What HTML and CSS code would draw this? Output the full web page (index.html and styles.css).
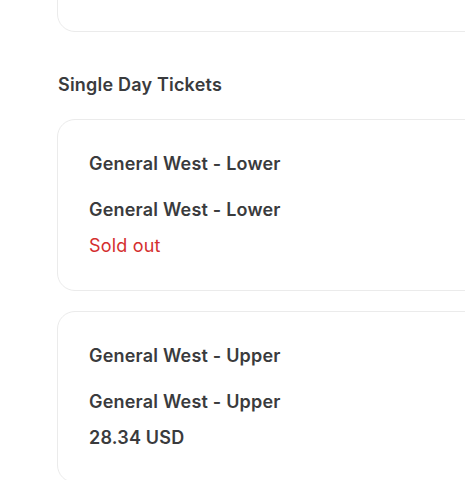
FILE: index.html
```html
<!DOCTYPE html>
<html lang="en">
<head>
<meta charset="utf-8">
<title>Tickets</title>
<link rel="stylesheet" href="styles.css">
</head>
<body>
<main class="page">
  <div class="card card-prev"></div>
  <h2 class="section-title">Single Day Tickets</h2>
  <div class="card">
    <div class="ticket-title">General West - Lower</div>
    <div class="ticket-name">General West - Lower</div>
    <div class="ticket-status sold-out">Sold out</div>
  </div>
  <div class="card">
    <div class="ticket-title">General West - Upper</div>
    <div class="ticket-name">General West - Upper</div>
    <div class="ticket-status price">28.34 USD</div>
  </div>
</main>
</body>
</html>
```
FILE: styles.css
```css
html, body {
  margin: 0;
  padding: 0;
  background: #ffffff;
  overflow: hidden;
}
.page {
  padding-left: 57px;
  font-family: Inter, "Liberation Sans", sans-serif;
  color: #3a3b3d;
  letter-spacing: 0.2px;
  display: flex;
  flex-direction: column;
}
.card {
  width: 520px;
  box-sizing: border-box;
  border: 1px solid #ebebeb;
  border-radius: 18px;
  padding: 32px 31px 32px;
  margin-bottom: 20px;
}
.card-prev {
  height: 172px;
  margin-top: -140px;
  margin-bottom: 41px;
}
.section-title {
  margin: 0 0 22px 1px;
  font-size: 18px;
  line-height: 24px;
  font-weight: 600;
}
.ticket-title,
.ticket-name,
.ticket-status {
  font-size: 18px;
  line-height: 24px;
}
.ticket-title { font-weight: 600; margin-bottom: 22px; }
.ticket-name { font-weight: 600; margin-bottom: 12px; }
.sold-out { color: #d42f2f; font-weight: 400; }
.price { font-weight: 600; }
```
